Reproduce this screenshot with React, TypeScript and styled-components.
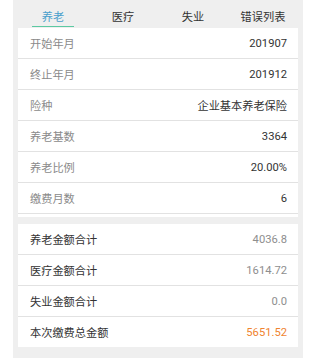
import React, { FC } from 'react';
import styled, { createGlobalStyle } from 'styled-components';

const GlobalStyle = createGlobalStyle`
  html, body {
    margin: 0;
    padding: 0;
    background: #ffffff;
    font-family: Roboto, "Noto Sans CJK SC", "Noto Sans", sans-serif;
  }
`;

const Panel = styled.div`
  margin-left: 13px;
  width: 280px;
  padding: 0 5px 11px;
  background: #efefef;
`;

const TabBar = styled.div`
  display: grid;
  grid-template-columns: repeat(4, 1fr);
  height: 28px;
`;

const Tab = styled.div<{ active?: boolean }>`
  position: relative;
  display: flex;
  align-items: center;
  justify-content: center;
  padding-top: 3px;
  font-size: 11.2px;
  color: ${(p) => (p.active ? '#4a9fcc' : '#333333')};

  &::after {
    content: '';
    display: ${(p) => (p.active ? 'block' : 'none')};
    position: absolute;
    left: 14px;
    right: 14px;
    bottom: 1px;
    height: 1.5px;
    background: #5cc9a2;
  }
`;

const Group = styled.div<{ padBottom?: number }>`
  background: #ffffff;
  padding-bottom: ${(p) => p.padBottom ?? 0}px;
`;

const Gap = styled.div`
  height: 7px;
`;

const Row = styled.div<{ last?: boolean }>`
  display: flex;
  align-items: center;
  justify-content: space-between;
  height: 30px;
  padding: 0 11px 0 12px;
  border-bottom: ${(p) => (p.last ? 'none' : '1px solid #e2e2e2')};
  font-size: 11.2px;
`;

const Label = styled.span<{ dark?: boolean }>`
  color: ${(p) => (p.dark ? '#333333' : '#8a8a8a')};
`;

const Value = styled.span<{ tone?: 'dark' | 'muted' | 'accent' }>`
  color: ${(p) =>
    p.tone === 'accent' ? '#f0842f' : p.tone === 'muted' ? '#8e8e8e' : '#333333'};
`;

const tabs = ['养老', '医疗', '失业', '错误列表'];

const details = [
  { label: '开始年月', value: '201907' },
  { label: '终止年月', value: '201912' },
  { label: '险种', value: '企业基本养老保险' },
  { label: '养老基数', value: '3364' },
  { label: '养老比例', value: '20.00%' },
  { label: '缴费月数', value: '6' },
];

const totals = [
  { label: '养老金额合计', value: '4036.8' },
  { label: '医疗金额合计', value: '1614.72' },
  { label: '失业金额合计', value: '0.0' },
  { label: '本次缴费总金额', value: '5651.52', accent: true },
];

const App: FC = () => {
  return (
    <>
      <GlobalStyle />
      <Panel>
        <TabBar>
          {tabs.map((t, i) => (
            <Tab key={t} active={i === 0}>
              {t}
            </Tab>
          ))}
        </TabBar>
        <Group padBottom={3}>
          {details.map((d) => (
            <Row key={d.label}>
              <Label>{d.label}</Label>
              <Value tone="dark">{d.value}</Value>
            </Row>
          ))}
        </Group>
        <Gap />
        <Group>
          {totals.map((d, i) => (
            <Row key={d.label} last={i === totals.length - 1}>
              <Label dark>{d.label}</Label>
              <Value tone={d.accent ? 'accent' : 'muted'}>{d.value}</Value>
            </Row>
          ))}
        </Group>
      </Panel>
    </>
  );
};

export default App;
